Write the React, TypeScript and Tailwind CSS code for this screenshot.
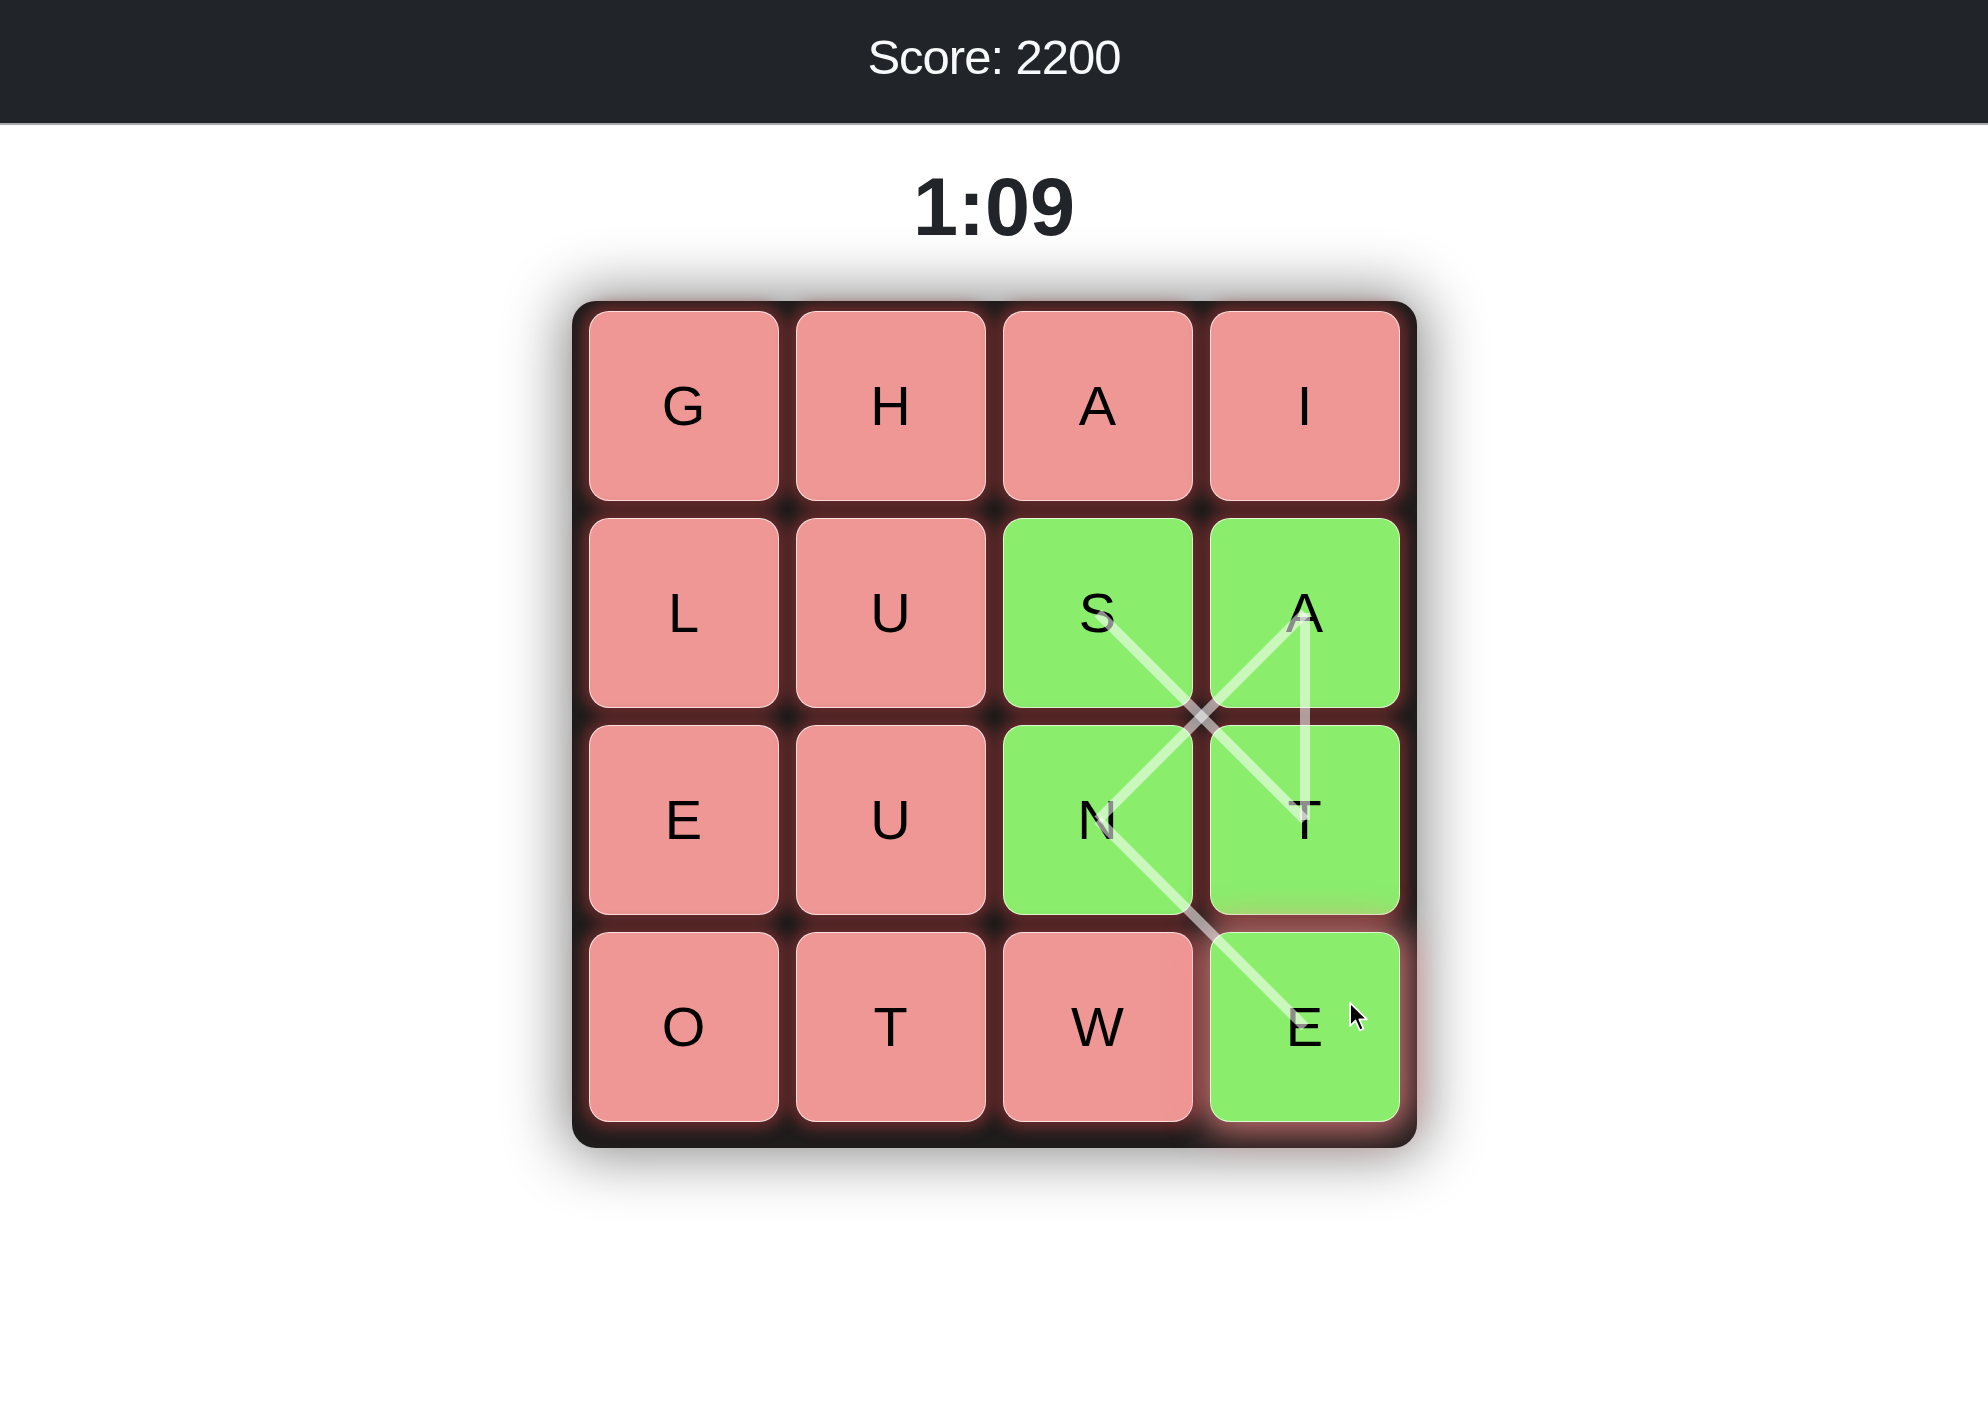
import React from 'react';

type Tile = { letter: string; active: boolean };

const letters = ['G', 'H', 'A', 'I', 'L', 'U', 'S', 'A', 'E', 'U', 'N', 'T', 'O', 'T', 'W', 'E'];
const activeIdx = [6, 7, 10, 11, 15];

const tiles: Tile[] = letters.map((l, i) => ({ letter: l, active: activeIdx.includes(i) }));

// tile centers inside the grid (190px tiles, 17px gap)
const center = (i: number) => 95 + i * 207;

// path of the current word: S -> T -> A -> N -> E
const path: [number, number][] = [
  [2, 1],
  [3, 2],
  [3, 1],
  [2, 2],
  [3, 3],
];

export default function App() {
  return (
    <div className="min-h-[1414px] bg-white font-['Liberation_Sans',Arial,sans-serif]">
      <header className="h-[125px] bg-[#212529] border-b-2 border-[#a7a9ad] flex items-center justify-center">
        <span className="text-[49px] tracking-[-1px] leading-none text-[#f8f9fa] pb-[8px]">Score: 2200</span>
      </header>

      <div className="mt-[42px] text-center text-[81px] font-bold leading-none text-[#212529]">1:09</div>

      <div className="mt-[53px] mx-auto w-fit rounded-[24px] bg-[#1f1c1c] px-[17px] pt-[10px] pb-[26px] shadow-[0_0_60px_8px_rgba(0,0,0,0.45)]">
        <div className="relative grid grid-cols-[repeat(4,190px)] gap-[17px]">
          {tiles.map((t, i) => (
            <div
              key={i}
              className={
                t.active
                  ? i === 15
                    ? 'h-[190px] rounded-[20px] border border-white/70 bg-[#8aed6c] flex items-center justify-center text-[56px] text-black shadow-[0_0_34px_10px_rgba(255,140,140,0.75)]'
                    : 'h-[190px] rounded-[20px] border border-white/70 bg-[#8aed6c] flex items-center justify-center text-[56px] text-black shadow-[0_0_14px_7px_rgba(150,52,52,0.6)]'
                  : 'h-[190px] rounded-[20px] border border-white/70 bg-[#ee9795] flex items-center justify-center text-[56px] text-black shadow-[0_0_14px_7px_rgba(150,52,52,0.6)]'
              }
            >
              {t.letter}
            </div>
          ))}

          <svg className="absolute inset-0 pointer-events-none" width="811" height="811" viewBox="0 0 811 811">
            {path.slice(1).map(([c, r], i) => {
              const [pc, pr] = path[i];
              return (
                <line
                  key={i}
                  x1={center(pc)}
                  y1={center(pr)}
                  x2={center(c)}
                  y2={center(r)}
                  stroke="rgba(255,255,255,0.55)"
                  strokeWidth="10"
                />
              );
            })}
          </svg>

          {/* mouse pointer */}
          <svg className="absolute left-[759px] top-[690px] pointer-events-none" width="22" height="32" viewBox="0 0 12 18">
            <path d="M1 1 L1 14 L4 11 L6.5 16.5 L8.5 15.6 L6.2 10.3 L10.5 10.3 Z" fill="#000" stroke="#fff" strokeWidth="1" strokeLinejoin="round" />
          </svg>
        </div>
      </div>
    </div>
  );
}
